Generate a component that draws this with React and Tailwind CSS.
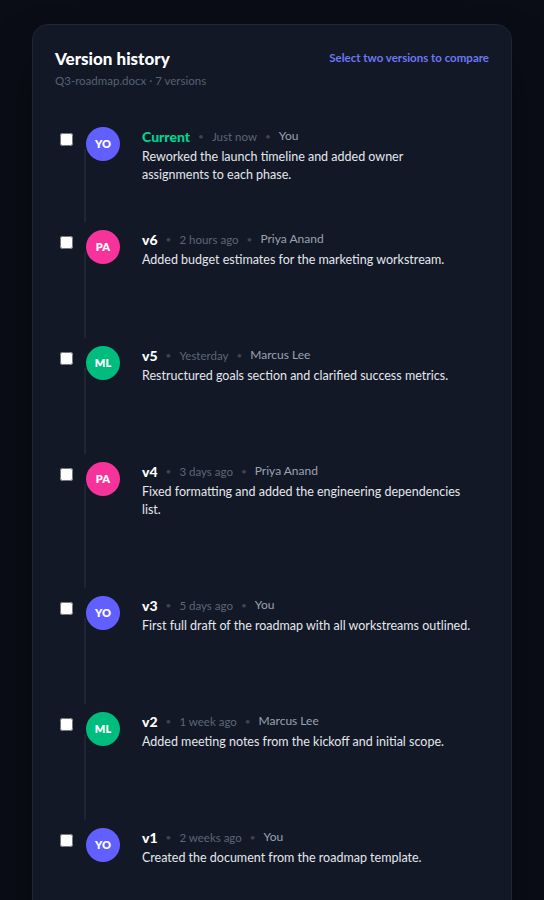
const versions = [
  {
    id: "current",
    label: "Current",
    time: "Just now",
    author: "You",
    initials: "YO",
    color: "bg-indigo-500",
    note: "Reworked the launch timeline and added owner assignments to each phase.",
    current: true,
  },
  {
    id: "v6",
    label: "v6",
    time: "2 hours ago",
    author: "Priya Anand",
    initials: "PA",
    color: "bg-pink-500",
    note: "Added budget estimates for the marketing workstream.",
  },
  {
    id: "v5",
    label: "v5",
    time: "Yesterday",
    author: "Marcus Lee",
    initials: "ML",
    color: "bg-emerald-500",
    note: "Restructured goals section and clarified success metrics.",
  },
  {
    id: "v4",
    label: "v4",
    time: "3 days ago",
    author: "Priya Anand",
    initials: "PA",
    color: "bg-pink-500",
    note: "Fixed formatting and added the engineering dependencies list.",
  },
  {
    id: "v3",
    label: "v3",
    time: "5 days ago",
    author: "You",
    initials: "YO",
    color: "bg-indigo-500",
    note: "First full draft of the roadmap with all workstreams outlined.",
  },
  {
    id: "v2",
    label: "v2",
    time: "1 week ago",
    author: "Marcus Lee",
    initials: "ML",
    color: "bg-emerald-500",
    note: "Added meeting notes from the kickoff and initial scope.",
  },
  {
    id: "v1",
    label: "v1",
    time: "2 weeks ago",
    author: "You",
    initials: "YO",
    color: "bg-indigo-500",
    note: "Created the document from the roadmap template.",
  },
];

const VersionRow = ({ version, last }) => (
  <li className="relative flex pl-[5px] pb-[46px]">
    {!last && (
      <span className="absolute left-[29px] top-[22px] bottom-2 w-0.5 bg-[#1f2633]" />
    )}
    <input type="checkbox" className="mt-[6px] h-[13px] w-[13px] shrink-0" />
    <div
      className={`ml-[13px] flex h-[34px] w-[34px] shrink-0 items-center justify-center rounded-full text-[11px] font-extrabold text-white ${version.color}`}
    >
      {version.initials}
    </div>
    <div className="ml-[22px] min-w-0 flex-1">
      <div className="flex h-[18px] items-center gap-2">
        <span
          className={`text-[14px] font-black ${version.current ? "text-emerald-400" : "text-white"}`}
        >
          {version.label}
        </span>
        <span className="text-[10px] text-[#3d4554]">•</span>
        <span className="text-[11.5px] text-[#5d6676]">{version.time}</span>
        <span className="text-[10px] text-[#3d4554]">•</span>
        <span className="text-[12px] text-[#9aa3b2]">{version.author}</span>
      </div>
      <p className="mt-[3px] max-w-[329.5px] text-[12.5px] leading-[18px] text-[#e4e7ec]">
        {version.note}
      </p>
      {!version.current && <div className="h-[31px]" />}
    </div>
  </li>
);

export default function App() {
  return (
    <div className="min-h-screen bg-[#0a0d16] px-8 pt-6 font-['Lato',sans-serif]">
      <div className="mx-auto w-full max-w-[480px] rounded-2xl border border-[#1f2533] bg-[#121826] px-[22px] pt-[23px] shadow-2xl shadow-black/60">
        <div className="flex items-start justify-between">
          <div>
            <h1 className="text-[17px] font-black leading-[22px] text-white">Version history</h1>
            <p className="mt-[2px] text-[11.5px] text-[#586172]">Q3-roadmap.docx · 7 versions</p>
          </div>
          <button className="mt-[1px] text-[11.5px] font-bold text-[#6e76f5]">
            Select two versions to compare
          </button>
        </div>

        <ul className="mt-[38px]">
          {versions.map((v, i) => (
            <VersionRow key={v.id} version={v} last={i === versions.length - 1} />
          ))}
        </ul>
      </div>
    </div>
  );
}
